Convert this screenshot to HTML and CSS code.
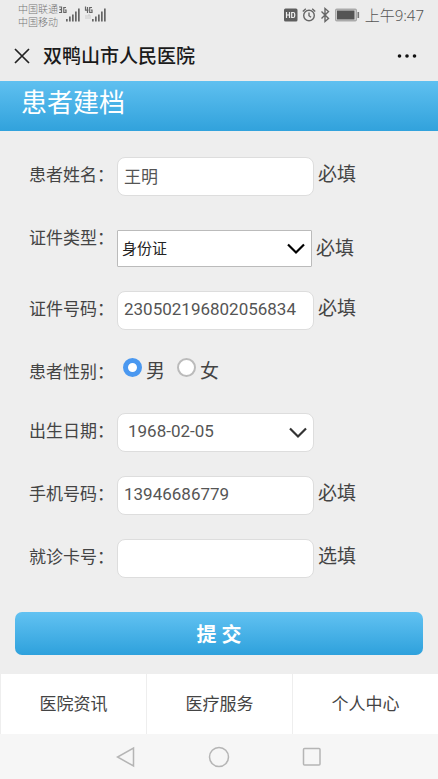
FILE: index.html
```html
<!DOCTYPE html>
<html lang="zh-CN">
<head>
<meta charset="utf-8">
<meta name="viewport" content="width=device-width, initial-scale=1">
<title>双鸭山市人民医院</title>
<link rel="stylesheet" href="styles.css">
</head>
<body>
<div class="status">
  <div class="carriers"><span>中国联通</span><span>中国移动</span></div>
  <svg class="signals" width="50" height="18" viewBox="0 0 50 18" aria-hidden="true">
    <g fill="none" stroke="#666" stroke-width="1.2">
      <path d="M1 2h2.500v5.500H1M1.500 4.700h2M8 2.500H5.800v5H8V5H7"/>
      <path d="M27.500 1.500v3.700h3M29.500 2v6M34 2.500h-2.300v5H34V5h-1"/>
    </g>
    <path fill="#666" d="M8 14h1.700v2.500H8zM11 11.500h1.700v5H11zM14 9.500h1.700v7H14zM17 6.500h1.700v10H17zM20 3.500h1.700v13H20zM34 14h1.700v2.500H34zM37 11.500h1.700v5H37zM40 9.500h1.700v7H40zM43 6.500h1.700v10H43zM46 3.500h1.700v13H46z"/>
    <path fill="none" stroke="#ccc" d="M28 10v4M30 14v-4h2v4"/>
  </svg>
  <svg class="indicators" width="78" height="18" viewBox="0 0 78 18" aria-hidden="true">
    <rect x="1" y="2.500" width="13.500" height="13" rx="1.500" fill="#5e5e5e"/>
    <path fill="none" stroke="#eee" stroke-width="1.200" d="M3.500 6v6M6.500 6v6M3.500 9h3M8.700 6.500h1.500q1.500 0 1.500 1.500v2q0 1.500-1.500 1.500H8.700z"/>
    <g fill="none" stroke="#666" stroke-width="1.400">
      <circle cx="26" cy="9.500" r="5.300"/>
      <path d="M26 6.500v3.200l2 1.500M19.800 5.500l3-2.800M32.200 5.500l-3-2.800"/>
      <path d="M38.500 5.500l7 7-3.500 3V2.500l3.500 3-7 7"/>
    </g>
    <rect x="52.700" y="3.200" width="20.600" height="11.600" rx="1" fill="#ddd" stroke="#aaa" stroke-width="1.400"/>
    <rect x="54" y="4.500" width="17.500" height="9" fill="#555"/>
    <path d="M75.300 6v6" stroke="#777" stroke-width="1.600"/>
  </svg>
  <time class="clock">上午9:47</time>
</div>
<header class="nav">
  <button class="icon-button" type="button" aria-label="关闭">
    <svg width="16" height="16" viewBox="0 0 16 16"><path d="M1 1l14 14M15 1L1 15" fill="none" stroke="#222" stroke-width="1.700"/></svg>
  </button>
  <span class="nav-title">双鸭山市人民医院</span>
  <button class="icon-button more" type="button" aria-label="更多">
    <svg width="20" height="6" viewBox="0 0 20 6" fill="#111"><circle cx="2.500" cy="3" r="1.800"/><circle cx="10" cy="3" r="1.800"/><circle cx="17.500" cy="3" r="1.800"/></svg>
  </button>
</header>
<h1 class="banner">患者建档</h1>
<main>
  <form class="form">
    <div class="row">
      <label class="label" for="name">患者姓名：</label>
      <input class="field" id="name" type="text" value="王明">
      <span class="mark">必填</span>
    </div>
    <div class="row row-type">
      <label class="label" for="type">证件类型：</label>
      <div class="picker picker-square">
        <select id="type"><option>身份证</option></select>
        <svg class="chevron" width="18" height="12" viewBox="0 0 18 12" aria-hidden="true"><path d="M1 1.500l8 8 8-8"/></svg>
      </div>
      <span class="mark">必填</span>
    </div>
    <div class="row">
      <label class="label" for="idno">证件号码：</label>
      <input class="field" id="idno" type="text" value="230502196802056834">
      <span class="mark">必填</span>
    </div>
    <div class="row row-sex" role="radiogroup" aria-labelledby="sex">
      <span class="label" id="sex">患者性别：</span>
      <label class="choice"><input type="radio" name="sex" checked>男</label>
      <label class="choice"><input type="radio" name="sex">女</label>
    </div>
    <div class="row">
      <label class="label" for="birth">出生日期：</label>
      <div class="picker">
        <select id="birth"><option>1968-02-05</option></select>
        <svg class="chevron" width="18" height="12" viewBox="0 0 18 12" aria-hidden="true"><path d="M1 1.500l8 8 8-8"/></svg>
      </div>
    </div>
    <div class="row">
      <label class="label" for="phone">手机号码：</label>
      <input class="field" id="phone" type="tel" value="13946686779">
      <span class="mark">必填</span>
    </div>
    <div class="row">
      <label class="label" for="card">就诊卡号：</label>
      <input class="field" id="card" type="text">
      <span class="mark">选填</span>
    </div>
    <button class="submit" type="submit">提 交</button>
  </form>
</main>
<nav class="tabs">
  <a href="#news">医院资讯</a>
  <a href="#service">医疗服务</a>
  <a href="#me">个人中心</a>
</nav>
<div class="system">
  <button class="icon-button" type="button" aria-label="返回"><svg width="20" height="22" viewBox="0 0 20 22"><path d="M17.500 2v18L1.500 11z"/></svg></button>
  <button class="icon-button" type="button" aria-label="主页"><svg width="22" height="22" viewBox="0 0 22 22"><circle cx="11" cy="11" r="9.500"/></svg></button>
  <button class="icon-button" type="button" aria-label="最近任务"><svg width="20" height="22" viewBox="0 0 20 22"><rect x="1.500" y="2.500" width="16.500" height="16.500" rx="1"/></svg></button>
</div>
</body>
</html>
```
FILE: styles.css
```css
* {
  box-sizing: border-box;
}

body {
  margin: 0;
  min-height: 100vh;
  display: flex;
  flex-direction: column;
  background: #eee;
  color: #444;
  font-family: Roboto, "Noto Sans CJK SC", sans-serif;
  font-size: 17px;
}

button,
input,
select {
  margin: 0;
  font: inherit;
  color: inherit;
}

svg {
  display: block;
}

.status {
  display: flex;
  align-items: center;
  height: 30px;
  padding: 0 14px 0 18px;
  background: #ececec;
  color: #777;
}

.carriers {
  display: flex;
  flex-direction: column;
  padding-top: 2px;
  font-size: 10px;
  line-height: 13px;
  font-weight: 300;
}

.signals {
  margin-bottom: 2px;
}

.indicators {
  margin-left: auto;
}

.clock {
  margin-left: 4px;
  font-size: 15px;
  line-height: 30px;
  font-weight: 300;
  font-family: "Noto Sans", "Noto Sans CJK SC", sans-serif;
  color: #555;
}

.nav {
  display: flex;
  align-items: center;
  gap: 13px;
  height: 51px;
  padding: 0 21px 0 14px;
  background: #ececec;
}

.nav-title {
  padding-top: 2px;
  color: #1a1a1a;
  font-size: 19px;
  line-height: 28px;
  font-weight: 500;
}

.icon-button {
  padding: 0;
  border: 0;
  background: none;
}

.more {
  margin-left: auto;
}

.banner {
  margin: 0;
  padding: 0 21px 6px;
  background: linear-gradient(#5fc0f0, #31a2dc);
  color: #fff;
  font-size: 26px;
  line-height: 44px;
  font-weight: 400;
}

main {
  flex: 1;
}

.form {
  display: flex;
  flex-direction: column;
  gap: 24px;
  padding: 26px 15px 19px;
}

.row {
  display: flex;
  align-items: flex-start;
  gap: 4px;
  min-height: 39px;
  padding-left: 14px;
}

.label {
  width: 84px;
  flex: none;
  line-height: 36px;
  white-space: nowrap;
}

.field,
.picker select {
  width: 100%;
  height: 39px;
  padding: 0 6px 3px;
  border: 1px solid #ddd;
  border-radius: 8px;
  background: #fff;
  color: #555;
}

.field,
.picker {
  flex: 0 1 197px;
  min-width: 0;
}

.picker {
  position: relative;
}

.picker select {
  display: block;
  padding: 0 32px 3px 10px;
  appearance: none;
}

.chevron {
  position: absolute;
  top: 50%;
  right: 7px;
  transform: translateY(-50%);
  fill: none;
  stroke: #333;
  stroke-width: 2.200;
  pointer-events: none;
}

.picker-square {
  flex-basis: 195px;
}

.picker-square select {
  height: 37px;
  padding-bottom: 0;
  padding-left: 4px;
  border-color: #bbb;
  border-radius: 1px;
  color: #222;
  font-size: 15px;
}

.picker-square .chevron {
  stroke: #000;
}

.mark {
  flex: none;
  font-size: 19px;
  line-height: 36px;
}

.row-type {
  min-height: 47px;
}

.row-type .picker,
.row-type .mark {
  align-self: flex-end;
}

.row-sex {
  min-height: 35px;
  height: 35px;
  gap: 12px;
}

.row-sex .label {
  width: 82px;
}

.choice {
  display: flex;
  gap: 4px;
  font-size: 19px;
  line-height: 36px;
}

.choice input {
  appearance: none;
  width: 19px;
  height: 19px;
  margin-top: 4px;
  border: 2px solid #bbb;
  border-radius: 50%;
  background: #fff;
}

.choice input:checked {
  border: 5px solid #4a98f0;
}

.submit {
  height: 43px;
  margin-top: 10px;
  padding: 0;
  border: 0;
  border-radius: 7px;
  background: linear-gradient(#62c2f2, #2ea1dc);
  color: #fff;
  font-size: 20px;
  font-weight: 700;
}

.tabs {
  display: grid;
  grid-template-columns: repeat(3, 1fr);
  background: #fff;
}

.tabs a {
  border-left: 1px solid #eee;
  color: #444;
  line-height: 60px;
  text-align: center;
  text-decoration: none;
}

.system {
  display: flex;
  align-items: center;
  justify-content: center;
  gap: 72px;
  height: 45px;
  background: #f6f6f6;
}

.system svg {
  fill: none;
  stroke: #b5b5b5;
  stroke-width: 1.500;
}
```
